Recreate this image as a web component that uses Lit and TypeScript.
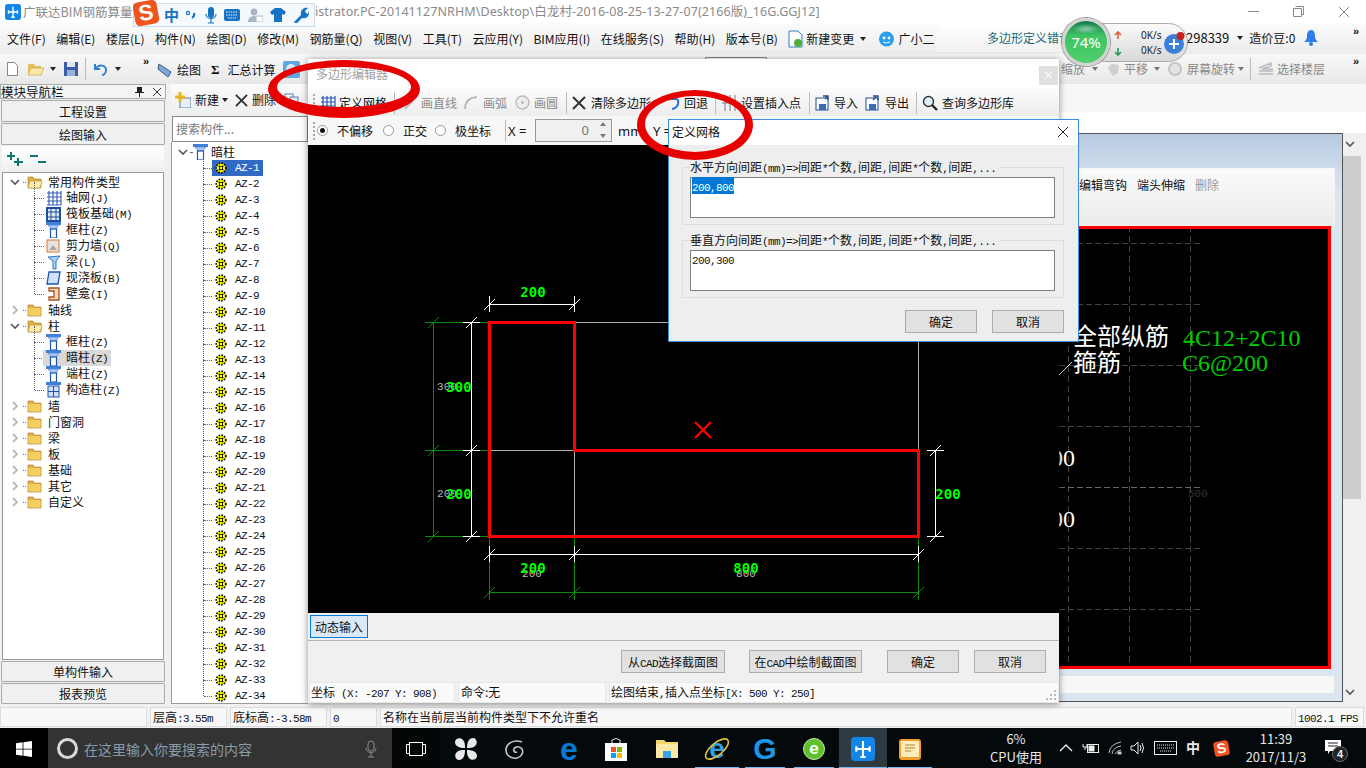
import { LitElement, html, svg, css } from 'lit';
import { customElement } from 'lit/decorators.js';

// latin runs get a fixed 6px pitch so they line up like the SimSun text in the app
const sim = (s: string) =>
  s.split(/([\x20-\x7e]+)/).map((p, i) => (i % 2 ? html`<span class="lat">${p}</span>` : p));

const chev = (open: boolean) => html`<svg class="ic" width="12" height="12" viewBox="0 0 12 12">
  <polyline points=${open ? '2,4 6,8 10,4' : '4,2 8,6 4,10'} fill="none" stroke=${open ? '#555' : '#aaa'} stroke-width="1.6"/></svg>`;

const folder = (open: boolean) => html`<svg class="ic" width="16" height="14" viewBox="0 0 16 14">
  <path d="M1 2h5l1 2h7v9H1z" fill="#e0b040" stroke="#a98a3a" stroke-width=".7"/>
  ${open
    ? svg`<path d="M3 6h12l-2 7H1z" fill="#fbeaa8" stroke="#b89a48" stroke-width=".7"/>`
    : svg`<rect x="1.5" y="5" width="12" height="7.5" fill="#f6cf62"/>`}</svg>`;

const colIcon = () => html`<svg class="ic" width="15" height="16" viewBox="0 0 15 16">
  <rect x="0" y="0" width="15" height="3" fill="#3f7fd6"/>
  <path d="M2 3h11l-3 4H5z" fill="#a8c8f0" stroke="#3f7fd6" stroke-width=".6"/>
  <rect x="4.5" y="7" width="6" height="9" fill="#fff" stroke="#1c55a8" stroke-width="1.2"/></svg>`;

const azIcon = () => html`<svg class="ic" width="12" height="12" viewBox="0 0 12 12">
  <circle cx="6" cy="6" r="4.8" fill="#ff0" stroke="#000" stroke-width="1.7" stroke-dasharray="1.6 1.2"/>
  <path d="M3.5 4.5h5M3.5 7.5h5M4.5 3.5v5M7.5 3.5v5" stroke="#000" stroke-width=".8"/></svg>`;

const gridIcon = (c = '#2b55a8') => html`<svg class="ic" width="16" height="16" viewBox="0 0 16 16">
  <path d="M1 3h14M1 7h14M1 11h14M1 15h14M3 1v14M7 1v14M11 1v14M15 1v14" stroke=${c} stroke-width="1.2" fill="none"/></svg>`;

const crossX = (c = '#333', s = 14) => html`<svg class="ic" width=${s} height=${s} viewBox="0 0 14 14">
  <path d="M1 1l12 12M13 1L1 13" stroke=${c} stroke-width="2" fill="none"/></svg>`;

const floppy = (arrow: string) => html`<svg class="ic" width="16" height="16" viewBox="0 0 16 16">
  <rect x="1" y="3" width="12" height="12" fill="#fff" stroke="#234a8a"/>
  <rect x="4" y="9" width="7" height="6" fill="#3a6cb8"/>
  <path d=${arrow} stroke="#234a8a" stroke-width="1.4" fill="none"/></svg>`;

const logo = (s: number) => html`<svg class="ic" width=${s} height=${s} viewBox="0 0 18 18">
  <rect width="18" height="18" rx="3" fill="#1185e8"/>
  <path d="M9 3v12M4 9h10M4 7v4M14 7v4M7 15h4" stroke="#fff" stroke-width="1.6" fill="none"/></svg>`;

const tree1: [number, string, string][] = [
  [0, 'o', '常用构件类型'], [1, 'g', '轴网(J)'], [1, 'b', '筏板基础(M)'], [1, 'c', '框柱(Z)'], [1, 'w', '剪力墙(Q)'],
  [1, 'l', '梁(L)'], [1, 'p', '现浇板(B)'], [1, 'n', '壁龛(I)'], [0, 'f', '轴线'], [0, 'o', '柱'],
  [1, 'c', '框柱(Z)'], [1, 's', '暗柱(Z)'], [1, 'c', '端柱(Z)'], [1, 'k', '构造柱(Z)'], [0, 'f', '墙'], [0, 'f', '门窗洞'],
  [0, 'f', '梁'], [0, 'f', '板'], [0, 'f', '基础'], [0, 'f', '其它'], [0, 'f', '自定义'],
];

const navIcon = (k: string) => {
  switch (k) {
    case 'g': return gridIcon('#3a62b8');
    case 'b': return html`<svg class="ic" width="15" height="15" viewBox="0 0 15 15"><rect x="1" y="1" width="13" height="13" fill="#dfe9f8" stroke="#1c4f9c" stroke-width="2"/><path d="M5 1v13M10 1v13M1 5h13M1 10h13" stroke="#1c4f9c"/></svg>`;
    case 'w': return html`<svg class="ic" width="15" height="14" viewBox="0 0 15 14"><rect x="1" y="1" width="12" height="12" fill="#e8e4dc" stroke="#d9743a"/><path d="M3 11l4-5 4 5z" fill="#aaa"/></svg>`;
    case 'l': return html`<svg class="ic" width="14" height="15" viewBox="0 0 14 15"><path d="M1 2l12-1-4 5v8H6V6z" fill="#a8d0f0" stroke="#2f78c8"/></svg>`;
    case 'p': return html`<svg class="ic" width="15" height="14" viewBox="0 0 15 14"><path d="M3 1h11l-2 12H1z" fill="#cfe2fa" stroke="#1c55a8" stroke-width="1.3"/></svg>`;
    case 'n': return html`<svg class="ic" width="12" height="14" viewBox="0 0 12 14"><path d="M1 1h10v12H1v-3h5V4H1z" fill="#f4d9bc" stroke="#a8521c" stroke-width="1.3"/></svg>`;
    case 'k': return html`<svg class="ic" width="15" height="16" viewBox="0 0 15 16"><rect x="0" y="0" width="15" height="3" fill="#3f7fd6"/><rect x="2" y="4" width="11" height="11" fill="#cfe0f8" stroke="#1c55a8"/><path d="M7.5 4v11M2 9.5h11" stroke="#1c55a8"/></svg>`;
    default: return colIcon();
  }
};

const lineSet = (rows: number[][], c: string, w = 1) =>
  rows.map(r => svg`<line x1=${r[0]} y1=${r[1]} x2=${r[2]} y2=${r[3]} stroke=${c} stroke-width=${w}/>`);
const diag = (x: number, y: number) => [x - 5, y + 6, x + 6, y - 5];

const greenLines = [
  [433, 322, 433, 536], [425, 322, 489, 322], [425, 450, 489, 450], [425, 536, 489, 536],
  diag(433, 322), diag(433, 450), diag(433, 536),
  [489, 536, 489, 600], [574, 536, 574, 600], [918, 536, 918, 600], [489, 592, 918, 592],
  diag(489, 592), diag(574, 592), diag(918, 592),
];
const whiteLines = [
  [489, 304, 574, 304], [489, 296, 489, 312], [574, 296, 574, 312], diag(489, 304), diag(574, 304),
  [471, 322, 471, 536], [463, 322, 480, 322], [463, 450, 480, 450], [463, 536, 480, 536],
  diag(471, 322), diag(471, 450), diag(471, 536),
  [489, 554, 918, 554], [489, 546, 489, 562], [574, 546, 574, 562], [918, 546, 918, 562],
  diag(489, 554), diag(574, 554), diag(918, 554),
  [935, 450, 935, 536], [927, 450, 944, 450], [927, 536, 944, 536], diag(935, 450), diag(935, 536),
];
const greyLines = [[574, 322, 918, 322], [918, 322, 918, 450], [489, 450, 574, 450], [574, 450, 574, 536]];

const gv = [1068, 1129, 1190];
const gh = [243, 304, 365, 426, 487, 548, 609];

@customElement('app-root')
export class AppRoot extends LitElement {
  static styles = css`
    :host {
      display: block;
      position: relative;
      width: 1366px;
      height: 768px;
      overflow: hidden;
      background: #f0f0f0;
      font: 12px/16px "Noto Sans CJK SC", "Noto Sans", sans-serif;
      color: #111;
    }
    * { box-sizing: border-box; }
    .ic { flex: none; display: block; }
    .lat { font: 11px/16px "Liberation Mono", monospace; letter-spacing: -0.6px; }
    .grey { color: #8a8a8a; }

    /* app chrome */
    .title { height: 23px; background: #fff; display: flex; align-items: center; padding-left: 5px; color: #8a8a8a; font-size: 13px; white-space: nowrap; }
    .title .t1 { margin-left: 2px; width: 292px; font-size: 12.5px; }
    .title .t2 { font-family: "Noto Sans", "Noto Sans CJK SC", sans-serif; font-size: 12.5px; letter-spacing: .08px; }
    .winbtns { margin-left: auto; display: flex; gap: 34px; padding-right: 16px; align-items: center; }
    .menu { height: 31px; background: linear-gradient(#fbfbfb, #ececec); display: flex; align-items: center; padding-left: 7px; gap: 10.5px; white-space: nowrap; }
    .menu .i { display: flex; align-items: center; gap: 3px; }
    .tab-err { position: absolute; left: 937px; top: 24px; width: 140px; height: 28px; border-radius: 4px 4px 0 0; background: linear-gradient(#fff, #f1f1f1); color: #1d6a70; font-size: 12px; line-height: 28px; padding-left: 50px; white-space: nowrap; overflow: hidden; }
    .menu-right { position: absolute; top: 30px; left: 1186px; display: flex; align-items: center; gap: 8px; font-size: 13px; white-space: nowrap; }
    .more { position: absolute; font: bold 11px/10px "Liberation Sans", sans-serif; }
    .tools { height: 30px; background: linear-gradient(#f8f8f8, #e8e8e8); display: flex; align-items: center; position: relative; white-space: nowrap; }
    .tools .g { display: flex; align-items: center; }
    .tab-stub { position: absolute; left: 705px; top: 3px; width: 62px; height: 4px; border: 1px solid #888; border-bottom: 0; background: #fff; }
    .sep { width: 1px; height: 22px; background: #bbb; flex: none; }
    .arrow { width: 0; height: 0; border: 3px solid transparent; border-top: 4px solid #222; border-bottom: 0; flex: none; }
    .arrow.dim { border-top-color: #777; }
    .faded { position: absolute; left: 1061px; top: 0; height: 30px; display: flex; align-items: center; color: #888; font-size: 12px; }

    .work { height: 623px; display: flex; }
    .nav { width: 166px; height: 620px; display: flex; flex-direction: column; flex: none; }
    .nav-head { height: 15px; border: 1px solid #aaa; display: flex; align-items: center; font-size: 12.5px; line-height: 13px; background: #f4f4f4; flex: none; }
    .nav-head span { flex: 1; }
    .nav-btn { height: 22px; margin: 1px 1px 0; background: #f0f0f0; border: 1px solid #aaa; border-radius: 1px; text-align: center; line-height: 22px; flex: none; }
    .nav-tools { height: 26px; margin: 1px 2px 0; display: flex; align-items: center; gap: 7px; padding-left: 5px; background: linear-gradient(#fff, #f0f0f0); flex: none; }
    .nav-tree { flex: 1; margin: 0 2px; background: #fff; border: 1px solid #999; padding-top: 1px; overflow: hidden; }
    .row { height: 16px; display: flex; align-items: center; white-space: nowrap; position: relative; }
    .exp { margin-left: 6px; width: 12px; }
    .dots { width: 3px; border-bottom: 1px dotted #666; height: 1px; margin: 0 1px 0 2px; flex: none; }
    .kid { padding-left: 31px; }
    .kid::before { content: ""; position: absolute; left: 31px; top: -8px; height: 16px; border-left: 1px dotted #666; }
    .kid .dots { width: 9px; margin: 0 2px 0 1px; }
    .lab { margin-left: 5px; }
    .node { display: flex; align-items: center; height: 16px; margin-left: -3px; padding: 0 3px; }
    .node.sel { background: #d9d9d9; }
    .slot { width: 15px; display: flex; justify-content: center; flex: none; }

    .comp { width: 137px; height: 620px; margin-left: 5px; flex: none; display: flex; flex-direction: column; }
    .comp-tools { height: 32px; background: linear-gradient(#fbfbfb, #eee); display: flex; align-items: center; padding-left: 4px; white-space: nowrap; overflow: hidden; flex: none; }
    .comp-search { height: 26px; border: 1px solid #888; margin-left: 1px; color: #777; padding-left: 3px; line-height: 23px; background: #fff; flex: none; }
    .comp-tree { flex: 1; overflow: hidden; background: #fff; border-left: 1px solid #999; border-bottom: 1px solid #999; padding-top: 2px; }
    .comp-tree .azr { padding-left: 31px; }
    .comp-tree .azr::before { content: ""; position: absolute; left: 31px; top: -8px; height: 16px; border-left: 1px dotted #666; }
    .azr .dots { width: 8px; margin: 0 0 0 1px; }
    .azr .az { display: flex; align-items: center; height: 16px; padding: 0 4px 0 3px; gap: 8px; }
    .azr .az.on { background: #316ac5; color: #fff; }

    .right { flex: 1; display: flex; flex-direction: column; position: relative; }
    .right-strip { height: 28px; background: #f7f7f7; flex: none; }
    .right-white { height: 21px; background: #fff; flex: none; }
    .rest { flex: 1; display: flex; justify-content: flex-end; }
    .behind { width: 313px; height: 569px; border: 1px solid #555; background: linear-gradient(#b9cbe0, #dbe6f3 60px, #dbe6f3); position: relative; flex: none; display: flex; flex-direction: column; padding: 34px 7px 7px 28px; }
    .inner-tb { height: 58px; background: linear-gradient(#fafafa, #ececec); border: 1px solid #f4f4f4; display: flex; align-items: flex-start; gap: 10px; padding: 8px 0 0 19px; flex: none; white-space: nowrap; }
    .cad { height: 443px; background: #000; border: 3px solid #f00; border-left: 0; margin-right: 4px; flex: none; position: relative; overflow: hidden; }
    .cad svg { position: absolute; left: 0; top: 0; }
    .inner-st { height: 19px; margin-top: 6px; background: #f7f7f7; border: 1px solid #e4e4e4; }
    .vscroll { width: 18px; margin-right: 5px; background: #f0f0f0; flex: none; display: flex; flex-direction: column; height: 569px; }
    .vscroll .th { flex: 0 0 343px; margin-top: 23px; background: #cdcdcd; position: relative; }
    .vscroll .up { position: absolute; top: -22px; left: 0; width: 14px; height: 20px; display: grid; place-items: center; }
    .vscroll .dn { margin-top: auto; height: 20px; width: 14px; display: grid; place-items: center; }

    .status { height: 21px; display: flex; gap: 3px; background: #f0f0f0; line-height: 18px; white-space: nowrap; }
    .status div { border: 1px solid #dcdcdc; background: #f8f8f8; padding-left: 2px; height: 20px; overflow: hidden; }

    /* task bar */
    .task { height: 41px; background: #04090c; display: flex; align-items: center; color: #fff; position: relative; }
    .start { width: 48px; height: 100%; background: #000; display: grid; place-items: center; flex: none; }
    .search { width: 344px; height: 100%; background: #333; display: flex; align-items: center; padding-left: 9px; color: #8a9aa6; font-size: 14px; flex: none; }
    .search .ring { width: 21px; height: 21px; border: 3px solid #d8d8d8; border-radius: 50%; margin-right: 6px; flex: none; }
    .search svg { margin-left: 113px; }
    .tk { position: absolute; top: 0; height: 41px; display: grid; place-items: center; }
    .tk.line::after { content: ""; position: absolute; left: 0; right: 0; bottom: 0; height: 2px; background: #76b9ed; }
    .tk.act { background: #2f3b40; }
    .tk-text { position: absolute; text-align: center; line-height: 18px; font-size: 13px; color: #e8e8e8; white-space: nowrap; }
    .badge { position: absolute; left: 1332px; top: 746px; }

    /* polygon editor window */
    .poly { position: absolute; left: 308px; top: 59px; width: 751px; height: 644px; background: #f0f0f0; box-shadow: 0 1px 7px rgba(0, 0, 0, .45); display: flex; flex-direction: column; }
    .poly-title { height: 30px; background: #fff; color: #a0a0a0; padding: 7px 0 0 8px; position: relative; flex: none; }
    .poly-close { position: absolute; left: 731px; top: 7px; width: 19px; height: 19px; background: #e0e0e0; color: #fff; text-align: center; line-height: 18px; font-size: 12px; }
    .poly-tools { height: 27px; background: linear-gradient(#fbfbfb, #ededed); display: flex; align-items: center; white-space: nowrap; flex: none; padding-left: 5px; }
    .grip { width: 2px; height: 18px; border-left: 2px dotted #aaa; flex: none; margin-right: 5px; }
    .poly-opts { height: 29px; display: flex; align-items: center; white-space: nowrap; flex: none; padding-left: 5px; background: #f7f7f7; }
    .radio { width: 11px; height: 11px; border-radius: 50%; border: 1px solid #999; background: #fff; flex: none; display: grid; place-items: center; }
    .radio.on::after { content: ""; width: 5px; height: 5px; border-radius: 50%; background: #111; }
    .num { width: 77px; height: 23px; border: 1px solid #999; background: #f0f0f0; color: #777; flex: none; text-align: right; padding-right: 22px; line-height: 21px; font-family: "Noto Sans", sans-serif; position: relative; font-size: 13px; }
    .spin { position: absolute; right: 3px; top: 2px; width: 10px; height: 16px; display: flex; flex-direction: column; justify-content: space-between; align-items: center; }
    .cv { height: 468px; background: #000; flex: none; position: relative; }
    .cv svg { display: block; position: absolute; inset: 0; }
    .dyn-row { height: 28px; border-bottom: 1px solid #b4b4b4; flex: none; padding: 2px 0 0 2px; }
    .dyn { width: 58px; height: 23px; background: #dbe9f7; border: 1px solid #0078d7; text-align: center; line-height: 21px; }
    .poly-btns { height: 41px; flex: none; display: flex; align-items: flex-start; padding-top: 9px; }
    .btn { height: 23px; background: #e1e1e1; border: 1px solid #adadad; text-align: center; line-height: 21px; white-space: nowrap; flex: none; }
    .poly-st { height: 21px; display: flex; gap: 3px; padding: 0 0 0 1px; flex: none; background: #f0f0f0; position: relative; }
    .poly-st div { background: #fafafa; border: 1px solid #e8e8e8; padding-left: 1px; line-height: 18px; white-space: nowrap; overflow: hidden; height: 21px; }
    .rz { position: absolute; right: 2px; bottom: 2px; }

    /* define grid dialog */
    .dlg { position: absolute; left: 668px; top: 119px; width: 411px; height: 223px; background: #eee; border: 1px solid #3a8de0; display: flex; flex-direction: column; }
    .dlg-title { height: 25px; background: #fff; padding: 4px 0 0 3px; display: flex; justify-content: space-between; flex: none; }
    .dlg-title svg { margin: 2px 9px 0 0; }
    .grp { margin: 22px 14px 0 13px; height: 58px; border: 1px solid #dcdcdc; position: relative; padding: 9px 8px 0 7px; flex: none; }
    .grp + .grp { margin-top: 15px; }
    .leg { position: absolute; left: 7px; top: -9px; background: #eee; padding-right: 4px; white-space: nowrap; line-height: 16px; }
    .ta { height: 41px; background: #fff; border: 1px solid #808080; padding: 2px 0 0 1px; line-height: 12px; }
    .ta .lat { line-height: 12px; }
    .selt { background: #0078d7; color: #fff; }
    .dlg-btns { display: flex; justify-content: flex-end; gap: 15px; padding: 12px 14px 0; }

    /* overlays */
    .ime { position: absolute; left: 133px; top: 3px; width: 182px; height: 24px; background: #f4f9fe; border: 1px solid #cfdce8; display: flex; align-items: center; }
    .ime b { color: #1672c4; font-size: 15px; margin-left: 30px; }
    .s-logo { position: absolute; left: 0; top: -3px; width: 24px; height: 24px; background: #f0541e; border-radius: 5px; transform: rotate(-10deg); color: #fff; font: bold 22px/24px "Liberation Sans", sans-serif; text-align: center; }
    .net { position: absolute; left: 1085px; top: 23px; width: 103px; height: 39px; border-radius: 20px; background: linear-gradient(#fafafa, #d8d8d8); border: 1px solid #aaa; font: 10px/15px "Noto Sans", sans-serif; color: #222; }
    .net span { position: absolute; left: 55px; }
    .ball { position: absolute; left: 1062px; top: 18px; width: 48px; height: 48px; border-radius: 50%; background: radial-gradient(ellipse 14px 5px at 50% 8px, #8fc8a8, transparent), linear-gradient(#157a4c, #3dc463 35%, #4fd06a); border: 3px solid #d4d4d4; box-shadow: 0 0 0 1px #999; color: #fff; font: 15px/42px "Noto Sans", sans-serif; text-align: center; }
    .anno { position: absolute; left: 0; top: 0; pointer-events: none; }
  `;

  private navTree() {
    return tree1.map(([lvl, k, label]) => {
      if (lvl === 0) {
        const open = k === 'o';
        return html`<div class="row"><span class="exp">${chev(open)}</span><span class="dots"></span>${folder(open)}<span class="lab">${label}</span></div>`;
      }
      return html`<div class="row kid"><span class="dots"></span><span class="node ${k === 's' ? 'sel' : ''}"><span class="slot">${navIcon(k)}</span><span class="lab">${sim(label)}</span></span></div>`;
    });
  }

  private compTree() {
    const rows = [];
    for (let i = 1; i <= 34; i++) {
      rows.push(html`<div class="row azr"><span class="dots"></span><span class="az ${i === 1 ? 'on' : ''}">${azIcon()}<span class="lat">AZ-${i}</span></span></div>`);
    }
    return rows;
  }

  private cadDrawing() {
    return html`<svg width="751" height="468" viewBox="308 145 751 468" shape-rendering="crispEdges">
      ${lineSet(greyLines, '#b0b0b0')}
      ${lineSet(greenLines, '#0a8a0a')}
      ${lineSet(whiteLines, '#fff')}
      <path d="M489.5 322.5H574.5V450.5H918.5V536.5H489.5Z" fill="none" stroke="#f00" stroke-width="3"/>
      <g font-family="Liberation Mono, monospace" font-size="11" fill="#bbb" text-anchor="middle" shape-rendering="auto">
        <text x="447" y="390">300</text><text x="447" y="497">200</text>
        <text x="532" y="577">200</text><text x="746" y="577">800</text>
      </g>
      <g font-family="DejaVu Sans Mono, monospace" font-weight="bold" font-size="14" fill="#0f0" text-anchor="middle" shape-rendering="auto">
        <text x="533" y="297">200</text>
        <text x="459" y="392">300</text><text x="459" y="499">200</text>
        <text x="533" y="573">200</text><text x="746" y="573">800</text>
        <text x="948" y="499">200</text>
      </g>
      <path d="M695 422l16 16M711 422l-16 16" stroke="#f00" stroke-width="2.4" shape-rendering="auto"/>
    </svg>`;
  }

  private cadBehind() {
    // viewBox is in page coords so the grid numbers can be read straight off the screen
    return html`<svg width="272" height="437" viewBox="1059 229 272 437" shape-rendering="crispEdges">
      ${gv.map(x => svg`<line x1=${x} y1="226" x2=${x} y2="668" stroke="#444" stroke-dasharray="6 4"/>`)}
      ${gh.map(y => svg`<line x1="1059" y1=${y} x2="1200" y2=${y} stroke=${y === 487 ? '#666' : '#444'} stroke-dasharray="6 3"/>`)}
      <line x1="1059" y1="375" x2="1072" y2="362" stroke="#ddd" shape-rendering="auto"/>
      <g shape-rendering="auto" font-family="Liberation Serif, Noto Sans CJK SC, serif" font-size="24">
        <text x="1073" y="345" fill="#fff">全部纵筋</text>
        <text x="1073" y="371" fill="#fff">箍筋</text>
        <text x="1183" y="346" fill="#0c0">4C12+2C10</text>
        <text x="1182" y="371" fill="#0c0">C6@200</text>
        <text x="1039" y="466" fill="#fff">200</text>
        <text x="1039" y="527" fill="#fff">200</text>
        <text x="1188" y="497" fill="#333" font-size="11" font-family="Liberation Mono, monospace">500</text>
      </g>
    </svg>`;
  }

  private taskIcons() {
    const fan = html`<svg width="24" height="24" viewBox="0 0 24 24" fill="#e8e8e8"><path d="M11 11C5 11 1 9 1 5s6-5 8-2c2 2 2 5 2 8zM13 11c0-6 2-10 6-10s5 6 2 8c-2 2-5 2-8 2zM13 13c6 0 10 2 10 6s-6 5-8 2c-2-2-2-5-2-8zM11 13c0 6-2 10-6 10s-5-6-2-8c2-2 5-2 8-2z"/></svg>`;
    const swirl = html`<svg width="22" height="22" viewBox="0 0 22 22" fill="none" stroke="#c8c8c8" stroke-width="1.6"><path d="M18 4C9 1 2 6 2 12c0 6 6 9 11 8 4-1 7-5 5-9-2-3-7-3-8 0-1 2 1 4 3 3"/></svg>`;
    const edge = html`<div style="font:bold 32px/32px 'Liberation Sans',sans-serif;color:#0a78d0">e</div>`;
    const store = html`<svg width="24" height="24" viewBox="0 0 24 24"><path d="M8 6V3q4-3 8 0v3" fill="none" stroke="#ddd"/><rect x="1" y="6" width="22" height="18" fill="#fff"/><rect x="7" y="10" width="5" height="5" fill="#f25022"/><rect x="13" y="10" width="5" height="5" fill="#7fba00"/><rect x="7" y="16" width="5" height="5" fill="#00a4ef"/><rect x="13" y="16" width="5" height="5" fill="#ffb900"/></svg>`;
    const explorer = html`<svg width="22" height="20" viewBox="0 0 22 20"><path d="M0 1h8l2 2h12v16H0z" fill="#f5d66e"/><rect x="0" y="5" width="22" height="14" fill="#fbe9a4"/><rect x="7" y="12" width="8" height="7" fill="#37a6e8"/></svg>`;
    const ie = html`<div style="position:relative;width:26px;height:26px;font:bold 28px/26px 'Liberation Sans',sans-serif;color:#2f9fe0;text-align:center">e<svg width="26" height="26" viewBox="0 0 26 26" style="position:absolute;left:0;top:0"><ellipse cx="13" cy="13" rx="14" ry="6" transform="rotate(-40 13 13)" fill="none" stroke="#e8c040" stroke-width="1.6"/></svg></div>`;
    const g = html`<div style="font:bold 30px/30px 'Liberation Sans',sans-serif;color:#1e96e6">G</div>`;
    const ge = html`<div style="width:22px;height:22px;border-radius:50%;background:#5fc02e;border:1px solid #c8e8a8;color:#fff;font:bold 17px/19px 'Liberation Sans',sans-serif;text-align:center">e</div>`;
    const note = html`<svg width="24" height="24" viewBox="0 0 24 24"><rect x="1" y="2" width="22" height="21" rx="3" fill="#f59c2a"/><rect x="3" y="4" width="18" height="16" fill="#fdeebb"/><path d="M7 8h10M7 11h10M7 14h6" stroke="#b08030"/></svg>`;
    const items: [number, number, unknown, string][] = [
      [444, 44, fan, ''], [493, 44, swirl, ''], [547, 44, edge, ''], [594, 44, store, ''], [645, 44, explorer, ''],
      [695, 44, ie, 'line'], [745, 40, g, 'line'], [794, 40, ge, 'line'], [839, 48, logo(24), 'line act'], [888, 44, note, 'line'],
    ];
    return items.map(([x, w, icon, c]) => html`<div class="tk ${c}" style="left:${x}px;width:${w}px">${icon}</div>`);
  }

  render() {
    return html`
      <div class="title">
        ${logo(16)}<span class="t1">广联达BIM钢筋算量</span>
        <span class="t2">istrator.PC-20141127NRHM\\Desktop\\白龙村-2016-08-25-13-27-07(2166版)_16G.GGJ12]</span>
        <span class="winbtns">
          <svg width="11" height="2"><rect width="11" height="1" y="0" fill="#888"/></svg>
          <svg width="11" height="11"><path d="M2.5 .5h8v8h-2M.5 2.5h8v8h-8z" fill="none" stroke="#888"/></svg>
          <svg width="12" height="12"><path d="M1 1l10 10M11 1L1 11" stroke="#888"/></svg>
        </span>
      </div>
      <div class="menu">
        ${['文件(F)', '编辑(E)', '楼层(L)', '构件(N)', '绘图(D)', '修改(M)', '钢筋量(Q)', '视图(V)', '工具(T)', '云应用(Y)', 'BIM应用(I)', '在线服务(S)', '帮助(H)', '版本号(B)'].map(m => html`<span>${m}</span>`)}
        <span class="i"><svg class="ic" width="15" height="18" viewBox="0 0 15 18"><path d="M1 1h9l4 4v12H1z" fill="#fff" stroke="#2a7fc8"/><circle cx="10" cy="13" r="4" fill="#4fae3a"/></svg><span>新建变更</span></span>
        <span class="arrow" style="margin-left:-5px"></span>
        <span class="i" style="margin-left:2px"><svg class="ic" width="17" height="16" viewBox="0 0 17 16"><circle cx="8.5" cy="8" r="7.5" fill="#2aa0e8"/><circle cx="6" cy="7" r="1.4" fill="#fff"/><circle cx="11" cy="7" r="1.4" fill="#fff"/><path d="M5 11q3.5 2 7 0" stroke="#fff" fill="none"/></svg><span>广小二</span></span>
      </div>
      <div class="tab-err">多边形定义错误</div>
      <div class="menu-right">
        <span>298339</span><span class="arrow"></span><span style="margin-left:-2px;font-size:12px">造价豆:0</span>
        <svg style="margin-left:1px" width="14" height="16" viewBox="0 0 14 16"><path d="M7 0c3 0 4 3 4 6s1 4 3 6H0c2-2 3-3 3-6s1-6 4-6z" fill="#2a7fe8"/><circle cx="7" cy="14" r="2" fill="#2a7fe8"/></svg>
      </div>
      <div class="more" style="left:1353px;top:26px">»</div>
      <div class="tools">
        <div class="tab-stub"></div>
        <div class="g" style="padding-left:7px">
          <svg class="ic" width="11" height="14" viewBox="0 0 11 14"><path d="M.5.5h7l3 3v10H.5z" fill="#fff" stroke="#888"/></svg>
          <svg class="ic" style="margin-left:10px" width="16" height="14" viewBox="0 0 16 14"><path d="M0 2h6l1 2h6v9H0z" fill="#e8c060"/><path d="M3 6h13l-3 7H0z" fill="#fbe9a4" stroke="#b89a48" stroke-width=".6"/></svg>
          <span class="arrow" style="margin-left:6px"></span>
          <svg class="ic" style="margin-left:8px" width="14" height="14" viewBox="0 0 14 14"><rect width="14" height="14" fill="#3a5fa8"/><rect x="3" y="0" width="8" height="5" fill="#dfe6f2"/><rect x="3" y="8" width="8" height="6" fill="#9ab0d4"/></svg>
          <span class="sep" style="margin-left:7px"></span>
          <svg class="ic" style="margin-left:8px" width="13" height="14" viewBox="0 0 13 14"><path d="M1 2v5h5M2 6c3-4 10-3 10 2 0 3-2 5-4 5" fill="none" stroke="#2a7fd8" stroke-width="2"/></svg>
          <span class="arrow" style="margin-left:8px"></span>
        </div>
        <div class="more" style="left:143px;top:2px">»</div>
        <div class="g" style="position:absolute;left:157px;top:7px">
          <svg class="ic" width="16" height="16" viewBox="0 0 16 16"><path d="M2 2l12 8-3 5L1 7z" fill="#7fa8d8" stroke="#345a8a"/></svg>
          <span style="margin-left:4px">绘图</span>
          <span style="margin-left:10px;font:bold 13px 'Liberation Serif',serif">Σ</span>
          <span style="margin-left:8px">汇总计算</span>
          <svg class="ic" style="margin-left:7px" width="17" height="17" viewBox="0 0 17 17"><rect width="17" height="17" rx="2" fill="#5fa8e0"/><circle cx="8" cy="8" r="5" fill="#d8ecf8"/></svg>
        </div>
        <div class="faded">
          <span>缩放</span><span class="arrow dim" style="margin-left:7px"></span>
          <svg class="ic" style="margin-left:8px" width="15" height="15" viewBox="0 0 15 15"><path d="M2 7q2-6 6-5l5 1-1 8-5 3z" fill="#d0d0d0"/></svg>
          <span style="margin-left:3px">平移</span><span class="arrow dim" style="margin-left:6px"></span>
          <svg class="ic" style="margin-left:7px" width="16" height="16" viewBox="0 0 16 16"><circle cx="8" cy="8" r="6" fill="#e4e4e4" stroke="#c4c4c4" stroke-width="2"/></svg>
          <span style="margin-left:4px">屏幕旋转</span><span class="arrow dim" style="margin-left:3px"></span>
          <span class="sep" style="margin-left:6px"></span>
          <svg class="ic" style="margin-left:7px" width="15" height="14" viewBox="0 0 15 14"><path d="M1 6l12-5v3L4 7h11M1 9h14M1 12h14" fill="none" stroke="#bbb" stroke-width="1.4"/></svg>
          <span style="margin-left:4px">选择楼层</span>
        </div>
        <div class="more" style="left:1353px;top:2px">»</div>
      </div>

      <div class="work">
        <div class="nav">
          <div class="nav-head"><span>模块导航栏</span>
            <svg style="margin-right:9px" width="9" height="11" viewBox="0 0 9 11"><path d="M2 1h5v5h2v1H5v4H4V7H0V6h2z" fill="#222"/></svg>
            <svg style="margin-right:4px" width="8" height="8" viewBox="0 0 8 8"><path d="M0 0l8 8M8 0L0 8" stroke="#333"/></svg>
          </div>
          <div class="nav-btn">工程设置</div>
          <div class="nav-btn">绘图输入</div>
          <div class="nav-tools">
            <svg class="ic" width="16" height="14" viewBox="0 0 16 14"><path d="M4 0v8M0 4h8M11 6v8M7 10h9" stroke="#0a7a6e" stroke-width="2"/></svg>
            <svg class="ic" width="16" height="14" viewBox="0 0 16 14"><path d="M0 4h8M8 10h8" stroke="#0a7a6e" stroke-width="2"/></svg>
          </div>
          <div class="nav-tree">${this.navTree()}</div>
          <div class="nav-btn" style="height:21px;line-height:20px">单构件输入</div>
          <div class="nav-btn" style="height:21px;line-height:20px">报表预览</div>
        </div>

        <div class="comp">
          <div class="comp-tools">
            <svg class="ic" width="16" height="16" viewBox="0 0 16 16"><rect x="5" y="6" width="11" height="10" fill="#e8f0fa" stroke="#5a7ab0"/><path d="M5 0v10M0 5h10" stroke="#e8b820" stroke-width="3"/></svg>
            <span style="margin-left:4px">新建</span><span class="arrow" style="margin-left:3px"></span>
            <span style="margin-left:7px">${crossX('#333', 13)}</span>
            <span style="margin-left:4px">删除</span>
            <svg class="ic" style="margin-left:8px" width="15" height="15" viewBox="0 0 15 15"><rect x="1" y="1" width="8" height="10" fill="#fff" stroke="#5a7ab0"/><rect x="6" y="4" width="8" height="10" fill="#dfe9f8" stroke="#5a7ab0"/></svg>
          </div>
          <div class="comp-search">搜索构件...</div>
          <div class="comp-tree">
            <div class="row"><span class="exp" style="margin-left:5px">${chev(true)}</span><span class="dots" style="width:2px;margin:0 1px"></span>${colIcon()}<span class="lab" style="margin-left:3px">暗柱</span></div>
            ${this.compTree()}
          </div>
        </div>

        <div class="right">
          <div class="right-strip"></div>
          <div class="right-white"></div>
          <div class="rest">
            <div class="behind">
              <div class="inner-tb"><span>编辑弯钩</span><span>端头伸缩</span><span style="color:#999">删除</span></div>
              <div class="cad">${this.cadBehind()}</div>
              <div class="inner-st"></div>
            </div>
            <div class="vscroll">
              <div class="th"><div class="up">${chev(true)}</div></div>
              <div class="dn">${chev(true)}</div>
            </div>
          </div>
        </div>
      </div>

      <div class="status">
        <div style="width:147px"></div>
        <div style="width:77px">${sim('层高:3.55m')}</div>
        <div style="width:97px">${sim('底标高:-3.58m')}</div>
        <div style="width:47px">${sim('0')}</div>
        <div style="width:912px">名称在当前层当前构件类型下不允许重名</div>
        <div style="width:69px">${sim('1002.1 FPS')}</div>
      </div>

      <div class="task">
        <div class="start"><svg width="16" height="16" viewBox="0 0 16 16"><path d="M0 2.2l6.6-.9v6.4H0zM7.4 1.2L16 0v7.7H7.4zM0 8.4h6.6v6.3L0 13.8zM7.4 8.4H16V16l-8.6-1.2z" fill="#fff"/></svg></div>
        <div class="search"><span class="ring"></span><span>在这里输入你要搜索的内容</span>
          <svg width="12" height="18" viewBox="0 0 12 18" fill="none" stroke="#8a8a8a"><rect x="3" y="1" width="6" height="10" rx="3"/><path d="M1 8c0 6 10 6 10 0M6 13v4M3 17h6"/></svg>
        </div>
        <div class="tk" style="left:392px;width:48px;background:#020607"><svg width="20" height="14" viewBox="0 0 20 14" fill="none" stroke="#fff"><rect x="3.5" y=".5" width="13" height="13"/><path d="M3 2.5H.5v9H3M17 2.5h2.5v9H17"/></svg></div>
        ${this.taskIcons()}
        <div class="tk-text" style="left:980px;top:2px;width:72px">6%<br/>CPU使用</div>
        <svg class="tk" style="left:1059px;top:14px;height:12px" width="14" viewBox="0 0 14 12"><path d="M1 9l6-6 6 6" stroke="#eee" stroke-width="1.4" fill="none"/></svg>
        <svg class="tk" style="left:1082px;top:13px;height:14px" width="17" viewBox="0 0 17 14" fill="none" stroke="#eee"><rect x="5.5" y="3.5" width="11" height="8"/><rect x="7" y="5" width="5" height="5" fill="#eee"/><path d="M1 3v3h4V3M3 6v3"/></svg>
        <svg class="tk" style="left:1108px;top:13px;height:14px" width="14" viewBox="0 0 14 14" fill="none" stroke="#bbb"><path d="M1 12Q2 3 13 1M4 13Q5 6 13 5M7 13q1-3 6-4"/><rect x="10" y="11" width="3" height="2" fill="#eee"/></svg>
        <svg class="tk" style="left:1130px;top:13px;height:14px" width="16" viewBox="0 0 16 14" fill="none" stroke="#eee"><path d="M1 5h3l4-4v12L4 9H1zM10 4q2 3 0 6M12 2q3 5 0 10"/></svg>
        <svg class="tk" style="left:1154px;top:13px;height:14px" width="23" viewBox="0 0 23 14" fill="none" stroke="#eee"><rect x=".5" y=".5" width="22" height="13"/><path d="M3 4h17M3 7h17M6 10h11" stroke-dasharray="1 1"/></svg>
        <div class="tk-text" style="left:1186px;top:10px;font-size:14px;font-weight:bold">中</div>
        <div class="tk" style="left:1214px;top:13px;width:15px;height:15px;background:#f0541e;border-radius:3px;transform:rotate(-10deg);font:bold 14px/15px 'Liberation Sans',sans-serif;color:#fff;display:block;text-align:center">S</div>
        <div class="tk-text" style="left:1240px;top:2px;width:72px;font-size:13px">11:39</div>
        <div class="tk-text" style="left:1240px;top:20px;width:72px;font-size:13px">2017/11/3</div>
        <svg class="tk" style="left:1325px;top:12px;height:15px" width="16" viewBox="0 0 16 15"><path d="M0 0h16v11H5l-2 3v-3H0z" fill="#fff"/><path d="M3 3h10M3 6h10" stroke="#222"/></svg>
      </div>
      <div class="badge" style="width:16px;height:16px;border-radius:50%;background:#222;border:1px solid #666;color:#eee;font:bold 11px/14px 'Liberation Sans',sans-serif;text-align:center">4</div>

      <div class="poly">
        <div class="poly-title">多边形编辑器<div class="poly-close">×</div></div>
        <div class="poly-tools">
          <span class="grip"></span>${gridIcon()}<span style="margin-left:3px;width:48px">定义网格</span>
          <span class="sep" style="margin:0 9px 0 7px"></span>
          <svg class="ic" width="15" height="15" viewBox="0 0 15 15"><path d="M1 14L13 1" stroke="#bbb" stroke-width="2"/></svg>
          <span class="grey" style="margin-left:2px;width:36px">画直线</span>
          <svg class="ic" style="margin-left:6px" width="15" height="15" viewBox="0 0 15 15"><path d="M2 14Q2 3 14 2" stroke="#bbb" stroke-width="2" fill="none"/></svg>
          <span class="grey" style="margin-left:5px;width:24px">画弧</span>
          <svg class="ic" style="margin-left:8px" width="15" height="15" viewBox="0 0 15 15"><circle cx="7.5" cy="7.5" r="6.5" fill="#eee" stroke="#bbb" stroke-width="1.4"/><circle cx="7.5" cy="7.5" r="1.5" fill="#bbb"/></svg>
          <span class="grey" style="margin-left:4px;width:24px">画圆</span>
          <span class="sep" style="margin:0 5px 0 8px"></span>
          ${crossX('#333')}<span style="margin-left:5px;width:73px">清除多边形</span>
          <svg class="ic" width="16" height="14" viewBox="0 0 16 14"><path d="M4 3h8q3 0 2 5-1 4-6 5" fill="none" stroke="#2a6fd0" stroke-width="2"/></svg>
          <span style="margin-left:4px;width:24px">回退</span>
          <span class="sep" style="margin:0 6px 0 7px"></span>
          <svg class="ic" width="16" height="16" viewBox="0 0 16 16"><path d="M3 0v16M8 0v16M13 0v16M0 8h16" stroke="#777"/></svg>
          <span style="margin-left:3px;width:60px">设置插入点</span>
          <span class="sep" style="margin:0 5px 0 8px"></span>
          ${floppy('M8 1h5v4M13 1l-3 3')}<span style="margin-left:3px;width:24px">导入</span>
          <span style="margin-left:7px"></span>
          ${floppy('M13 5V1H8M8 5l3-3')}<span style="margin-left:4px;width:24px">导出</span>
          <span class="sep" style="margin:0 5px 0 7px"></span>
          <svg class="ic" width="16" height="16" viewBox="0 0 16 16"><circle cx="6.5" cy="6.5" r="5" fill="#dff0fc" stroke="#333" stroke-width="1.4"/><path d="M10 10l5 5" stroke="#222" stroke-width="2.4"/></svg>
          <span style="margin-left:4px">查询多边形库</span>
        </div>
        <div class="poly-opts">
          <span class="grip" style="margin-right:2px"></span>
          <span class="radio on"></span><span style="margin-left:9px;width:35px">不偏移</span>
          <span class="radio" style="margin-left:11px"></span><span style="margin-left:9px;width:24px">正交</span>
          <span class="radio" style="margin-left:8px"></span><span style="margin-left:9px;width:36px">极坐标</span>
          <span class="sep" style="margin:0 2px 0 14px"></span>
          <span style="width:27px;font:13px 'Noto Sans',sans-serif">X =</span>
          <div class="num">0<span class="spin"><span class="arrow dim" style="transform:rotate(180deg)"></span><span class="arrow dim"></span></span></div>
          <span style="margin-left:6px;width:35px;font:13px 'Noto Sans',sans-serif">mm</span>
          <span style="font:13px 'Noto Sans',sans-serif">Y =</span>
        </div>
        <div class="cv">${this.cadDrawing()}</div>
        <div class="dyn-row"><div class="dyn">动态输入</div></div>
        <div class="poly-btns">
          <div class="btn" style="width:104px;margin-left:313px">${sim('从CAD选择截面图')}</div>
          <div class="btn" style="width:113px;margin-left:24px">${sim('在CAD中绘制截面图')}</div>
          <div class="btn" style="width:72px;margin-left:25px">确定</div>
          <div class="btn" style="width:72px;margin-left:15px">取消</div>
        </div>
        <div class="poly-st">
          <div style="width:146px">${sim('坐标 (X: -207 Y: 908)')}</div>
          <div style="width:148px;padding-left:2px">命令:无</div>
          <div style="flex:1">${sim('绘图结束,插入点坐标[X: 500 Y: 250]')}</div>
          <svg class="rz" width="11" height="11" viewBox="0 0 11 11" fill="#bbb"><rect x="8" y="0" width="2" height="2"/><rect x="4" y="4" width="2" height="2"/><rect x="8" y="4" width="2" height="2"/><rect x="0" y="8" width="2" height="2"/><rect x="4" y="8" width="2" height="2"/><rect x="8" y="8" width="2" height="2"/></svg>
        </div>
      </div>

      <div class="dlg">
        <div class="dlg-title"><span>定义网格</span><svg width="12" height="12" viewBox="0 0 12 12"><path d="M1 1l10 10M11 1L1 11" stroke="#222"/></svg></div>
        <div class="grp">
          <div class="leg">${sim('水平方向间距(mm)=>间距*个数,间距,间距*个数,间距,...')}</div>
          <div class="ta"><span class="selt">${sim('200,800')}</span></div>
        </div>
        <div class="grp">
          <div class="leg">${sim('垂直方向间距(mm)=>间距*个数,间距,间距*个数,间距,...')}</div>
          <div class="ta">${sim('200,300')}</div>
        </div>
        <div class="dlg-btns">
          <div class="btn" style="width:72px">确定</div>
          <div class="btn" style="width:72px">取消</div>
        </div>
      </div>

      <div class="ime">
        <div class="s-logo">S</div>
        <b>中</b>
        <svg style="margin-left:6px" width="12" height="12" viewBox="0 0 12 12"><circle cx="3" cy="4" r="1.6" fill="none" stroke="#1672c4" stroke-width="1.2"/><path d="M9 4q1 3-2 5" fill="none" stroke="#1672c4" stroke-width="2"/></svg>
        <svg style="margin-left:8px" width="12" height="17" viewBox="0 0 12 17"><rect x="3" y="0" width="6" height="11" rx="3" fill="#1672c4"/><path d="M1 7c0 6 10 6 10 0M6 12v4M3 16h6" fill="none" stroke="#1672c4" stroke-width="1.2"/></svg>
        <svg style="margin-left:7px" width="16" height="12" viewBox="0 0 16 12"><rect width="16" height="12" rx="2" fill="#1672c4"/><path d="M2 3h12M2 6h12M4 9h8" stroke="#fff" stroke-dasharray="1.4 1"/></svg>
        <svg style="margin-left:7px" width="16" height="14" viewBox="0 0 16 14"><circle cx="7" cy="4" r="3.4" fill="#a8b4c0"/><path d="M1 14q0-6 6-6t6 6z" fill="#a8b4c0"/><rect x="9" y="8" width="7" height="6" fill="#fff" stroke="#a8b4c0"/></svg>
        <svg style="margin-left:7px" width="16" height="14" viewBox="0 0 16 14"><path d="M5 0h6l5 4-2 3-2-1v8H4V6L2 7 0 4z" fill="#1672c4"/></svg>
        <svg style="margin-left:7px" width="16" height="16" viewBox="0 0 16 16"><path d="M1 15l7-7c-1-4 2-8 7-7l-3 3 1 2 2 1 1-3c1 5-3 8-7 7l-6 6z" fill="#1672c4"/></svg>
      </div>

      <div class="net">
        <svg style="position:absolute;left:28px;top:7px" width="8" height="26" viewBox="0 0 8 26"><path d="M4 8V2M1 4l3-3 3 3" stroke="#e0603a" stroke-width="1.6" fill="none"/><path d="M4 17v6M1 21l3 3 3-3" stroke="#2a9a50" stroke-width="1.6" fill="none"/></svg>
        <span style="top:4px">0K/s</span><span style="top:19px">0K/s</span>
        <svg style="position:absolute;left:76px;top:6px" width="24" height="26" viewBox="0 0 24 26"><circle cx="12" cy="14" r="10" fill="#3a7fd8"/><path d="M12 9v10M7 14h10" stroke="#fff" stroke-width="2"/><circle cx="18.5" cy="6" r="4" fill="#c82020"/></svg>
      </div>
      <div class="ball">74%</div>

      <svg class="anno" width="1366" height="768">
        <path fill="#e60000" fill-rule="evenodd" d="M268 89a76 29 0 1 0 152 0a76 29 0 1 0 -152 0z M277 87a67 20 0 1 0 134 0a67 20 0 1 0 -134 0z"/>
        <path fill="#e60000" fill-rule="evenodd" d="M637 125a58 35 0 1 0 116 0a58 35 0 1 0 -116 0z M645 124a50 28 0 1 0 100 0a50 28 0 1 0 -100 0z"/>
      </svg>
    `;
  }
}
